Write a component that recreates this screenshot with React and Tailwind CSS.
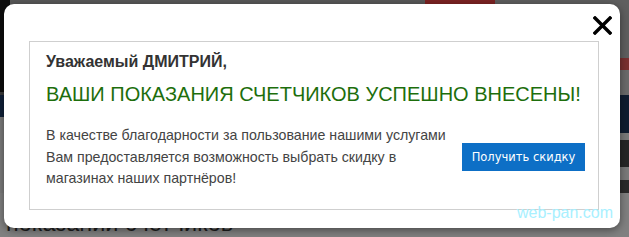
export default function App() {
  return (
    <div className="relative w-[629px] h-[237px] overflow-hidden bg-[#7a7a7a] font-['Liberation_Sans',Arial,sans-serif]">
      {/* dimmed page behind the popup */}
      <div className="flex flex-col h-full">
        <div className="flex h-[106px]">
          <div className="w-[10px] flex flex-col">
            <div className="h-[92px] bg-[#0d0d0d]" />
            <div className="flex-1 bg-[#3a3a3a]" />
          </div>
          <div className="w-[415px] bg-[#585858]" />
          <div className="w-[70px] bg-[#7d2323]" />
          <div className="flex-1 flex flex-col bg-[#5f5f5f]">
            <div className="h-[58px]" />
            <div className="h-[12px] bg-[#7a3030]" />
            <div className="flex-1 bg-[#6a6a6a]" />
          </div>
        </div>
        <div className="flex h-[42px]">
          <div className="w-[10px] flex flex-col">
            <div className="h-[22px] bg-[#102038]" />
            <div className="flex-1 bg-[#7c7c7c]" />
          </div>
          <div className="flex-1 bg-[#0f1c30]" />
        </div>
        <div className="flex h-[60px]">
          <div className="flex-1 bg-[#7c7c7c]" />
          <div className="w-[12px] flex flex-col">
            <div className="h-[7px] bg-[#7a7a7a]" />
            <div className="h-[27px] bg-[#262626]" />
            <div className="h-[13px] bg-[#7a7a7a]" />
            <div className="h-[13px] bg-[#2a2a2a]" />
          </div>
        </div>
        <div className="flex-1 bg-[#808080] pl-[6px] pt-[16px]">
          <div className="text-[23.5px] leading-[28px] text-[#1e1e1e] whitespace-nowrap">
            показании счетчиков
          </div>
        </div>
      </div>

      {/* popup */}
      <div className="absolute left-[4px] top-[4px] w-[616px] h-[224px] bg-white rounded-[10px] shadow-[0_2px_8px_rgba(0,0,0,0.45)]">
        <div className="flex justify-end pt-[12px] pr-[8px]">
          <svg width="19" height="19" viewBox="0 0 19 19">
            <path d="M2 2 L17 17 M17 2 L2 17" stroke="#000" strokeWidth="3.4" strokeLinecap="square" />
          </svg>
        </div>
        <div className="ml-[25px] mt-[6px] w-[570px] h-[169px] border border-[#cfcfcf] pl-[16px] pr-[13px] pt-[10px]">
          <div className="text-[16px] leading-[20px] font-bold text-[#333333] whitespace-nowrap">
            Уважаемый ДМИТРИЙ,
          </div>
          <div className="mt-[10px] text-[20px] leading-[24px] text-[#1d6e0c] whitespace-nowrap">
            ВАШИ ПОКАЗАНИЯ СЧЕТЧИКОВ УСПЕШНО ВНЕСЕНЫ!
          </div>
          <div className="mt-[19px] flex items-center">
            <p className="text-[14.2px] leading-[21.5px] text-[#444444] whitespace-nowrap">
              В качестве благодарности за пользование нашими услугами
              <br />
              Вам предоставляется возможность выбрать скидку в
              <br />
              магазинах наших партнёров!
            </p>
            <button className="ml-auto w-[123px] h-[28px] bg-[#0d6fc6] text-white text-[11.5px] font-['DejaVu_Sans',sans-serif] flex items-center justify-center">
              Получить скидку
            </button>
          </div>
        </div>
        <div className="absolute right-[7px] top-[200px] text-[16px] leading-[17px] text-[#a8f0ff]">
          web-pan.com
        </div>
      </div>
    </div>
  );
}
